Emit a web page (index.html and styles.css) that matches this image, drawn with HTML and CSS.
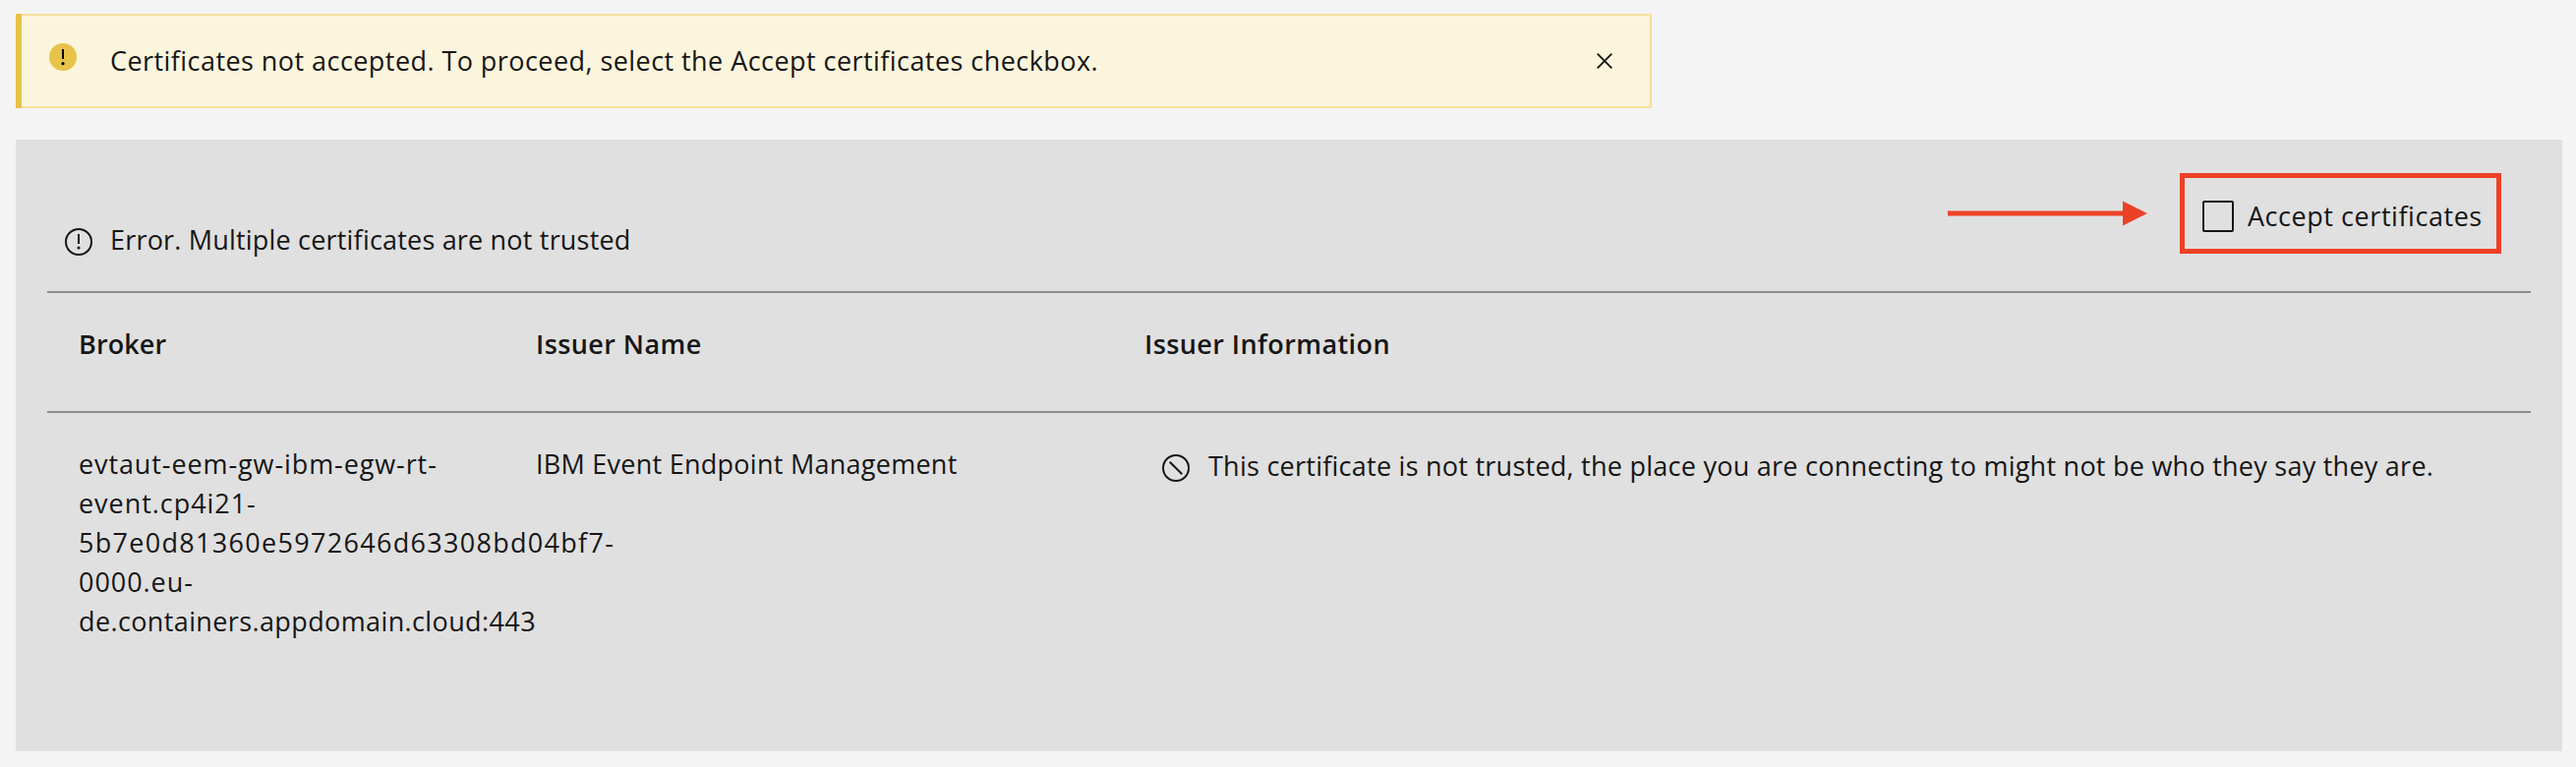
FILE: index.html
```
<!DOCTYPE html>
<html lang="en">
<head>
<meta charset="utf-8">
<title>Certificates</title>
<link rel="stylesheet" href="styles.css">
</head>
<body>
<main class="page">
  <section class="notice" role="alert">
    <svg class="notice-icon" viewBox="0 0 28 28"><circle cx="14" cy="14" r="14" fill="#e8c34a"/><path d="M13 6h2v10h-2z"/><circle cx="14" cy="20.7" r="1.6"/></svg>
    <p class="notice-text">Certificates not accepted. To proceed, select the Accept certificates checkbox.</p>
    <button class="notice-close" aria-label="Close"><svg viewBox="0 0 16 16"><path d="M.7.7l14.6 14.6M15.3.7.7 15.3" stroke="#161616" stroke-width="1.9"/></svg></button>
  </section>
  <section class="panel">
    <header class="panel-head">
      <svg class="icon error-icon" viewBox="0 0 28 28"><circle cx="14" cy="14" r="13" fill="none" stroke="#161616" stroke-width="2"/><path d="M13 6h2v10h-2z" fill="#161616"/><circle cx="14" cy="20" r="1.6" fill="#161616"/></svg>
      <p class="error-text">Error. Multiple certificates are not trusted</p>
      <svg class="arrow" viewBox="0 0 203 26"><path d="M0 10.5h178V.5l25 12.500-25 12.500v-10H0z" fill="#ec4127"/></svg>
      <label class="accept"><input class="accept-box" type="checkbox"><span class="accept-label">Accept certificates</span></label>
    </header>
    <div class="row row-head">
      <div class="cell head-broker">Broker</div>
      <div class="cell head-name">Issuer Name</div>
      <div class="cell head-info">Issuer Information</div>
    </div>
    <div class="row row-body">
      <div class="cell broker">
        <span class="line host">evtaut-eem-gw-ibm-egw-rt-</span>
        <span class="line">event.cp4i21-</span>
        <span class="line hash">5b7e0d81360e5972646d63308bd04bf7-</span>
        <span class="line zone">0000.eu-</span>
        <span class="line domain">de.containers.appdomain.cloud:443</span>
      </div>
      <div class="cell issuer">IBM Event Endpoint Management</div>
      <div class="cell trust">
        <svg class="icon" viewBox="0 0 28 28"><circle cx="14" cy="14" r="13" fill="none" stroke="#161616" stroke-width="2"/><path d="M7.700 7.700l12.600 12.600" stroke="#161616" stroke-width="2"/></svg>
        <span class="trust-text">This certificate is not trusted, the place you are connecting to might not be who they say they are.</span>
      </div>
    </div>
  </section>
</main>
</body>
</html>
```
FILE: styles.css
```
* { box-sizing: border-box; }
body {
  margin: 0;
  background: #f4f4f4;
  color: #161616;
  font: 27px/40px "Open Sans", "Noto Sans", sans-serif;
}
p { margin: 0; }
svg { display: block; flex: none; }
.page {
  display: flex;
  flex-direction: column;
  gap: 32px;
  height: 780px;
  padding: 14px 14px 16px 16px;
}
.notice {
  display: flex;
  align-items: flex-start;
  position: relative;
  width: 1664px;
  height: 96px;
  padding-right: 38px;
  background: #fcf5dd;
  border: 2px solid #f5e09b;
  border-left: 0;
}
.notice::before {
  content: "";
  position: absolute;
  left: 0;
  top: -2px;
  width: 6px;
  height: 96px;
  background: #e8c34a;
}
.notice-icon { width: 28px; height: 28px; margin: 28px 34px 0; }
.notice-text { flex: 1; padding-top: 26px; letter-spacing: .44px; }
.notice-close {
  width: 16px;
  height: 16px;
  margin-top: 38px;
  padding: 0;
  border: 0;
  background: none;
}
.panel { flex: 1; padding: 0 32px; background: #e0e0e0; }
.panel-head {
  display: flex;
  align-items: flex-start;
  height: 156px;
  padding: 0 30px 0 18px;
  border-bottom: 2px solid #8d8d8d;
}
.icon { width: 28px; height: 28px; }
.error-icon { margin: 90px 18px 0 0; }
.error-text { flex: 1; padding-top: 82px; letter-spacing: .19px; }
.arrow { width: 203px; height: 26px; margin: 62px 33px 0 0; }
.accept {
  display: flex;
  width: 327px;
  height: 82px;
  margin-top: 34px;
  padding: 19px 0 0 18px;
  border: 5px solid #ec4127;
}
.accept-box {
  appearance: none;
  flex: none;
  width: 32px;
  height: 32px;
  margin: 4px 14px 0 0;
  border: 2px solid #161616;
  border-radius: 2px;
}
.accept-label { letter-spacing: .55px; white-space: nowrap; }
.row { display: grid; grid-template-columns: 464px 620px 1fr; padding-left: 32px; }
.row-head {
  height: 122px;
  padding-top: 32px;
  border-bottom: 2px solid #8d8d8d;
  font-weight: 600;
}
.row-body { padding-top: 32px; }
.cell { white-space: nowrap; }
.head-broker { letter-spacing: .1px; }
.head-name { padding-left: 1px; letter-spacing: .42px; }
.head-info { letter-spacing: .42px; }
.line { display: block; letter-spacing: .95px; }
.host { letter-spacing: .9px; }
.hash { letter-spacing: 1.3px; }
.domain { letter-spacing: .38px; }
.issuer { padding-left: 1px; letter-spacing: .26px; }
.trust { display: flex; padding: 2px 0 0 18px; }
.trust .icon { margin: 8px 19px 0 0; }
.trust-text { letter-spacing: .25px; }
```
